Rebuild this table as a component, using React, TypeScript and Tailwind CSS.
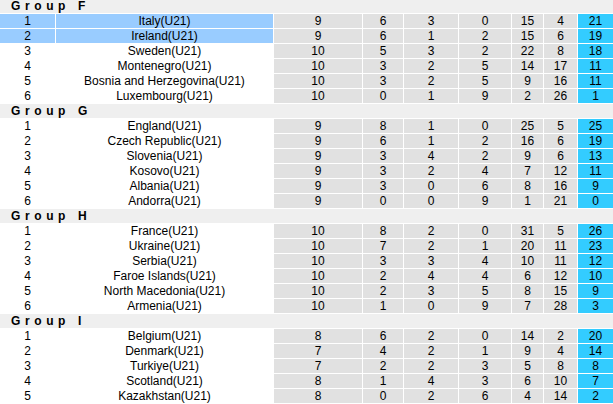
import React from "react";

type Row = [string, number, number, number, number, number, number, number];

const groups: { name: string; rows: Row[] }[] = [
  {
    name: "F",
    rows: [
      ["Italy(U21)", 9, 6, 3, 0, 15, 4, 21],
      ["Ireland(U21)", 9, 6, 1, 2, 15, 6, 19],
      ["Sweden(U21)", 10, 5, 3, 2, 22, 8, 18],
      ["Montenegro(U21)", 10, 3, 2, 5, 14, 17, 11],
      ["Bosnia and Herzegovina(U21)", 10, 3, 2, 5, 9, 16, 11],
      ["Luxembourg(U21)", 10, 0, 1, 9, 2, 26, 1],
    ],
  },
  {
    name: "G",
    rows: [
      ["England(U21)", 9, 8, 1, 0, 25, 5, 25],
      ["Czech Republic(U21)", 9, 6, 1, 2, 16, 6, 19],
      ["Slovenia(U21)", 9, 3, 4, 2, 9, 6, 13],
      ["Kosovo(U21)", 9, 3, 2, 4, 7, 12, 11],
      ["Albania(U21)", 9, 3, 0, 6, 8, 16, 9],
      ["Andorra(U21)", 9, 0, 0, 9, 1, 21, 0],
    ],
  },
  {
    name: "H",
    rows: [
      ["France(U21)", 10, 8, 2, 0, 31, 5, 26],
      ["Ukraine(U21)", 10, 7, 2, 1, 20, 11, 23],
      ["Serbia(U21)", 10, 3, 3, 4, 10, 11, 12],
      ["Faroe Islands(U21)", 10, 2, 4, 4, 6, 12, 10],
      ["North Macedonia(U21)", 10, 2, 3, 5, 8, 15, 9],
      ["Armenia(U21)", 10, 1, 0, 9, 7, 28, 3],
    ],
  },
  {
    name: "I",
    rows: [
      ["Belgium(U21)", 8, 6, 2, 0, 14, 2, 20],
      ["Denmark(U21)", 7, 4, 2, 1, 9, 4, 14],
      ["Turkiye(U21)", 7, 2, 2, 3, 5, 8, 8],
      ["Scotland(U21)", 8, 1, 4, 3, 6, 10, 7],
      ["Kazakhstan(U21)", 8, 0, 2, 6, 4, 14, 2],
    ],
  },
];

export default function App() {
  return (
    <div
      className="w-[613px] h-[404px] overflow-hidden bg-white text-black text-[12px] leading-[14px]"
      style={{ fontFamily: '"Liberation Sans", Arial, sans-serif' }}
    >
      <div className="-mt-px grid grid-cols-[55px_217px_88px_40px_54px_52px_31px_33px_35px] gap-px">
        {groups.map((g) => (
          <React.Fragment key={g.name}>
            <div className="col-span-9 h-[14px] bg-[#efefef] pl-[11px] font-bold tracking-[4.6px] whitespace-pre">
              {`Group ${g.name}`}
            </div>
            {g.rows.map((r, i) => {
              const hl = g.name === "F" && i < 2;
              const left = hl ? "bg-[#99ccff]" : "bg-white";
              return (
                <React.Fragment key={r[0]}>
                  <div className={`h-[14px] text-center ${left}`}>{i + 1}</div>
                  <div className={`h-[14px] text-center whitespace-nowrap ${left}`}>{r[0]}</div>
                  {r.slice(1, 7).map((v, k) => (
                    <div key={k} className="h-[14px] text-center bg-[#e1e1e1]">
                      {v}
                    </div>
                  ))}
                  <div className="h-[14px] text-center bg-[#33ccff]">{r[7]}</div>
                </React.Fragment>
              );
            })}
          </React.Fragment>
        ))}
      </div>
    </div>
  );
}
